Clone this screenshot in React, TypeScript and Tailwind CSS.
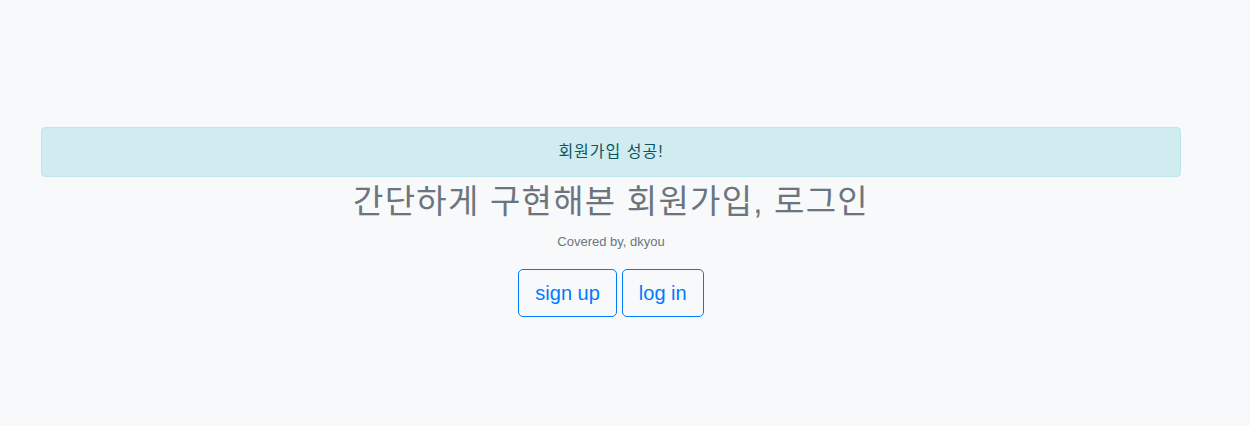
import React from "react";

const font = { fontFamily: '"Liberation Sans", "Noto Sans CJK KR", sans-serif' };

export default function App() {
  return (
    <div
      className="w-[1250px] h-[426px] bg-[#f8f9fa] pt-[127px]"
      style={font}
    >
      <div className="ml-[41px] w-[1140px] flex flex-col items-center">
        <div className="w-full h-[50px] flex items-center justify-center rounded-[4px] border border-[#bee5eb] bg-[#d1ecf1] text-[#0c5460] text-[16px] tracking-[1px]">
          회원가입 성공!
        </div>
        <h1 className="mt-[5px] text-[33px] leading-[1.2] text-[#6c757d] font-normal tracking-[1.25px]">
          간단하게 구현해본 회원가입, 로그인
        </h1>
        <p className="mt-[11px] text-[13px] leading-[18px] text-[#6c757d]">
          Covered by, dkyou
        </p>
        <div className="mt-[18px] flex gap-[5px]">
          <button className="h-[48px] px-[16px] rounded-[5px] border border-[#007bff] text-[#007bff] text-[20px]">
            sign up
          </button>
          <button className="h-[48px] px-[16px] rounded-[5px] border border-[#007bff] text-[#007bff] text-[20px]">
            log in
          </button>
        </div>
      </div>
    </div>
  );
}
